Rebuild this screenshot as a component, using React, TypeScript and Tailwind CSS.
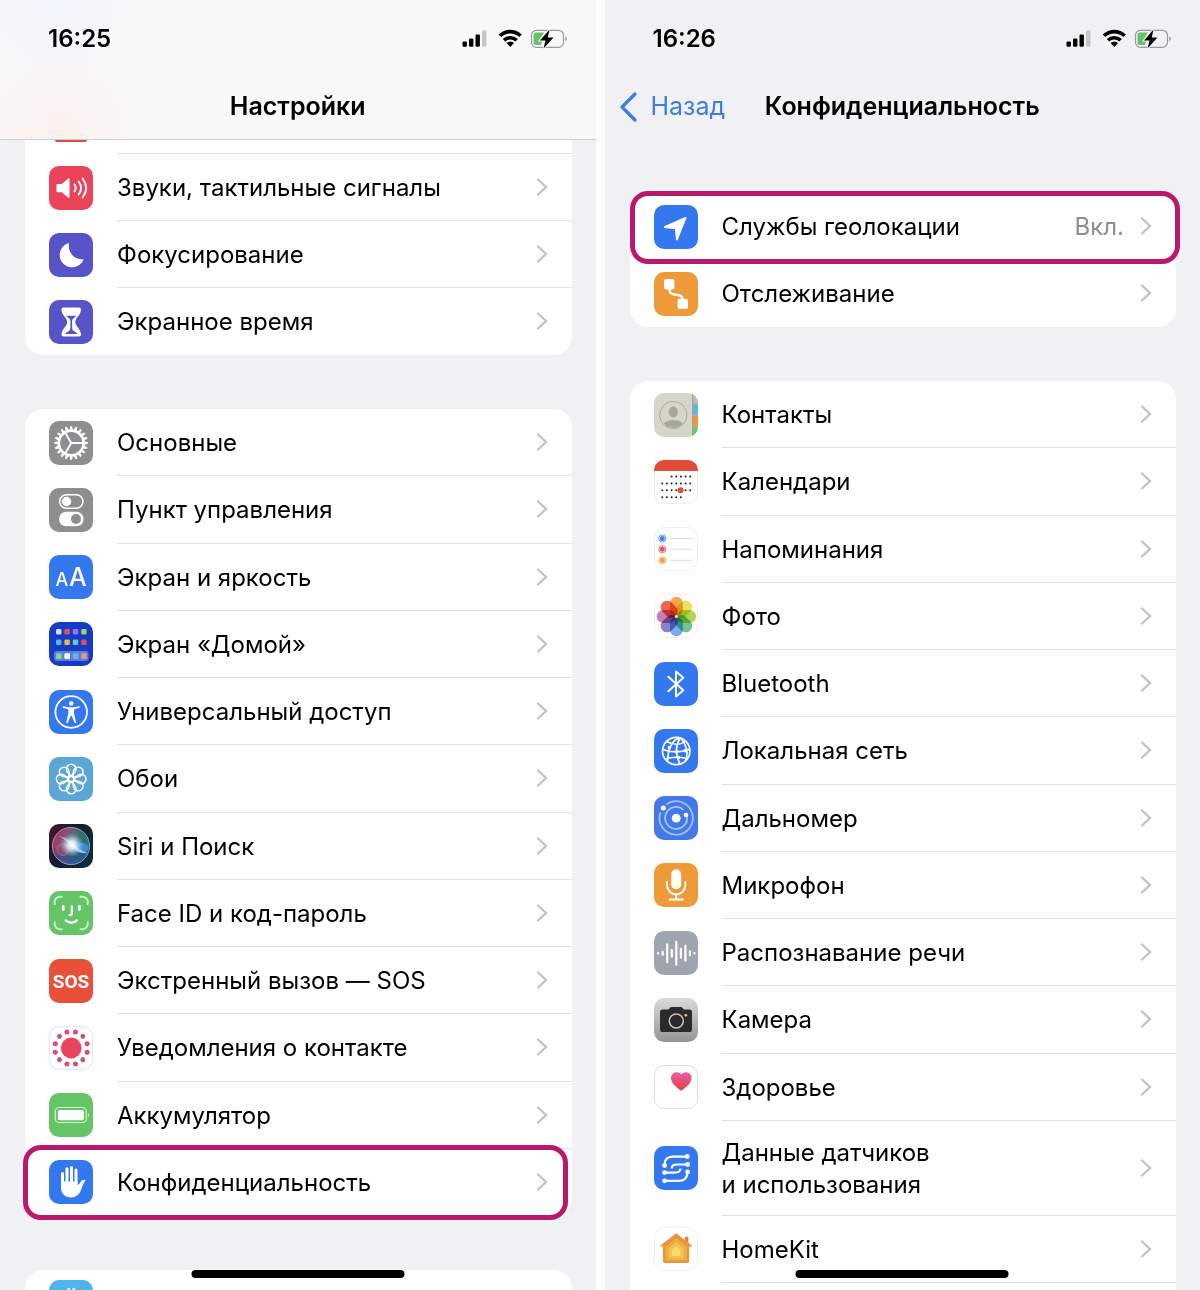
import type { ReactNode } from "react";

type Item = {
  label: ReactNode;
  icon: ReactNode;
  value?: string;
  tall?: boolean;
  highlight?: string;
};

/* ---------- icon helpers ---------- */

function Tile({ bg, outline, children }: { bg: string; outline?: string; children?: ReactNode }) {
  return (
    <svg viewBox="0 0 44 44" className="size-11 shrink-0" aria-hidden="true">
      <rect
        x={outline ? 0.5 : 0}
        y={outline ? 0.5 : 0}
        width={outline ? 43 : 44}
        height={outline ? 43 : 44}
        rx="10"
        fill={bg}
        stroke={outline ?? "none"}
      />
      {children}
    </svg>
  );
}

const steps = (n: number) => Array.from({ length: n }, (_, i) => i);

const BLUE = "#3478f0";
const GREEN = "#64c466";
const GRAY = "#8e8e91";
const ORANGE = "#ee9a38";
const INDIGO = "#5753c9";

const SoundIcon = () => (
  <Tile bg="#ea445a">
    <path d="M8.4 18h4.400l6.400-5.500c.5-.4 1.300-.1 1.300.6v18c0 .7-.8 1-1.300.6l-6.400-5.500H8.400a.9.9 0 0 1-.9-.9v-6.400c0-.5.4-.9.9-.9z" fill="#fff" />
    <g fill="none" stroke="#fff" strokeWidth="1.900" strokeLinecap="round">
      <path d="M25.400 18.400q2.600 3.600 0 7.200" />
      <path d="M29.600 15.500q5 6.500 0 13" />
      <path d="M33.600 12.500q7.200 9.500 0 19" />
    </g>
  </Tile>
);

const MoonIcon = () => (
  <Tile bg={INDIGO}>
    <path d="M19.200 10.200a.6.6 0 0 1 .8.800 13 13 0 0 0 13.700 15.200a.6.6 0 0 1 .7.9A12.400 12.400 0 1 1 19.200 10.200z" fill="#fff" />
  </Tile>
);

const HourglassIcon = () => (
  <Tile bg={INDIGO}>
    <path
      d="M14.500 7.500h15.500c1.500 0 2.200 1 2 2.400-.6 5.600-5.700 7.800-5.700 12.100s5.100 6.500 5.700 12.100c.2 1.400-.5 2.400-2 2.400H14.500c-1.500 0-2.200-1-2-2.400.6-5.600 5.700-7.800 5.700-12.100s-5.100-6.500-5.700-12.100c-.2-1.400.5-2.400 2-2.400z"
      fill="#fff"
    />
    <path d="M17.300 15.700h9.900q-1.200 1.600-3.100 3c-.8.600-1 1.300-1 2.300v7q0 2.400 2.200 3.400l2.600 1.500q1 1.200-.6 1.200H17.200q-1.600 0-.6-1.200l2.600-1.500q2.200-1 2.200-3.400v-7c0-1-.2-1.700-1-2.300q-1.900-1.400-3.100-3z" fill={INDIGO} />
  </Tile>
);

const GearIcon = () => (
  <Tile bg={GRAY}>
    {steps(20).map((i) => (
      <path key={i} d="M21.200 8.400l.5-2.900h1l.5 2.900z" fill="#fff" stroke="#fff" strokeWidth=".9" transform={`rotate(${i * 18} 22.200 22)`} />
    ))}
    <g fill="none" stroke="#fff">
      <circle cx="22.200" cy="22" r="12.400" strokeWidth="2.600" />
      <path d="M22.200 22h12M22.200 22l-6-10.400M22.200 22l-6 10.400" strokeWidth="1.900" />
    </g>
  </Tile>
);

const ControlIcon = () => (
  <Tile bg={GRAY}>
    <rect x="10.600" y="6.800" width="23.400" height="13.400" rx="6.700" fill="none" stroke="#fff" strokeWidth="1.500" />
    <circle cx="17.500" cy="13.500" r="4.700" fill="#fff" />
    <rect x="10" y="23.700" width="24.600" height="14.600" rx="7.300" fill="#fff" />
    <circle cx="27" cy="31" r="5" fill={GRAY} />
  </Tile>
);

const DisplayIcon = () => (
  <Tile bg={BLUE}>
    <g fontFamily="Inter, sans-serif" fontWeight="500" fill="#fff">
      <text x="6.500" y="31" fontSize="18">A</text>
      <text x="20" y="31" fontSize="25">A</text>
    </g>
  </Tile>
);

const HomeScreenIcon = () => {
  const rows = [
    { y: 7, c: ["#d9dce6", "#e0526a", "#a36bf0", "#9fd06a"] },
    { y: 17.6, c: ["#55b4f5", "#e8b84a", "#63c9c0", "#e0504d"] },
  ];
  return (
    <Tile bg="#163bc4">
      <rect x="5" y="29" width="34.500" height="10" rx="3" fill="#5f7dd8" />
      {rows.map((r) => r.c.map((c, i) => <rect key={c} x={7 + i * 8.4} y={r.y} width="5.400" height="5.400" rx="1.200" fill={c} />))}
      {["#86d68c", "#ffffff", "#62b5f5", "#e09a78"].map((c, i) => (
        <rect key={c} x={7 + i * 8.4} y="31.300" width="5.600" height="5.600" rx="1.200" fill={c} />
      ))}
    </Tile>
  );
};

const AccessibilityIcon = () => (
  <Tile bg={BLUE}>
    <circle cx="22.200" cy="22" r="15.800" fill="none" stroke="#fff" strokeWidth="1.800" />
    <circle cx="22.200" cy="13.500" r="2.200" fill="#fff" />
    <path
      d="M14.500 16.300l5 1h5.400l5-1c1-.1 1.200 1.300.2 1.600l-5 1.300v4.600l2 8.200c.3 1.200-1.200 1.600-1.600.5L22.700 26h-1l-2.800 6.500c-.5 1.100-1.900.7-1.600-.5l2-8.200v-4.600l-5-1.300c-1-.3-.8-1.700.2-1.600z"
      fill="#fff"
    />
  </Tile>
);

const WallpaperIcon = () => (
  <Tile bg="#5ba6d6">
    <g fill="none" stroke="#fff" strokeWidth="1.500">
      {steps(8).map((i) => (
        <path key={i} d="M22.200 19C18.600 16 17.400 13.700 17.400 12a4.800 4.800 0 0 1 9.600 0C27 13.700 25.800 16 22.200 19z" transform={`rotate(${i * 45} 22.200 22)`} />
      ))}
      <circle cx="22.200" cy="22" r="2.600" />
    </g>
  </Tile>
);

const SiriIcon = () => (
  <Tile bg="url(#siri-bg)">
    <defs>
      <linearGradient id="siri-bg" x1="0" y1="0" x2="1" y2=".6">
        <stop offset="0" stopColor="#4a1532" />
        <stop offset=".5" stopColor="#171b2c" />
        <stop offset="1" stopColor="#0f2a3c" />
      </linearGradient>
      <linearGradient id="siri-orb" x1="0" y1=".2" x2="1" y2=".6">
        <stop offset="0" stopColor="#b5305c" />
        <stop offset=".45" stopColor="#6c6080" />
        <stop offset=".7" stopColor="#257468" />
        <stop offset="1" stopColor="#2a6fae" />
      </linearGradient>
      <radialGradient id="siri-core">
        <stop offset="0" stopColor="#fff" />
        <stop offset=".35" stopColor="#eef6ff" stopOpacity=".85" />
        <stop offset="1" stopColor="#9cc4ee" stopOpacity="0" />
      </radialGradient>
      <linearGradient id="siri-shade" x1="0" y1="0" x2="0" y2="1">
        <stop offset=".5" stopColor="#141c48" stopOpacity="0" />
        <stop offset="1" stopColor="#3a5ba8" stopOpacity=".9" />
      </linearGradient>
    </defs>
    <circle cx="22" cy="22" r="18.600" fill="url(#siri-orb)" />
    <circle cx="22" cy="22" r="18.600" fill="url(#siri-shade)" stroke="#a0b0c0" strokeOpacity=".8" />
    <circle cx="14" cy="25.500" r="6" fill="#c84a80" fillOpacity=".35" stroke="#e39ab4" strokeOpacity=".5" strokeWidth=".7" />
    <ellipse cx="33" cy="24" rx="6.500" ry="5" fill="#3e9be0" fillOpacity=".75" />
    <path d="M9 12q9 1 15 8 6 6 15 9-10 1-17-6Q17 15 9 12z" fill="#e6f2ff" opacity=".55" />
    <circle cx="23" cy="21" r="12" fill="url(#siri-core)" />
  </Tile>
);

const FaceIdIcon = () => (
  <Tile bg={GREEN}>
    <path
      d="M5.700 13V11a5.200 5.200 0 0 1 5.200-5.200h2M31.500 5.800h2A5.200 5.200 0 0 1 38.700 11v2M38.700 31v2a5.200 5.200 0 0 1-5.200 5.200h-2M12.900 38.200h-2A5.200 5.200 0 0 1 5.700 33v-2"
      fill="none"
      stroke="#c9f2c9"
      strokeWidth="2"
      strokeLinecap="round"
    />
    <g fill="none" stroke="#fff" strokeWidth="2.300" strokeLinecap="round">
      <path d="M14.200 15.500v3M30.400 15.500v3" strokeWidth="2.800" />
      <path d="M22.800 15.500v7q0 1.700-2.200 1.700" />
      <path d="M16.800 29.500q5.500 4.400 11 0" />
    </g>
  </Tile>
);

const SosIcon = () => (
  <Tile bg="#e8503a">
    <text x="22" y="29" textAnchor="middle" fontFamily="Roboto, sans-serif" fontWeight="700" fontSize="19" fill="#fff">
      SOS
    </text>
  </Tile>
);

const ExposureIcon = () => (
  <Tile bg="#fff" outline="#e6e6e8">
    <circle cx="22.200" cy="22" r="10.400" fill="#e9455c" />
    {steps(12).map((i) => (
      <circle key={i} cx="22.200" cy="5.500" r="2.500" fill="#d4507a" transform={`rotate(${15 + i * 30} 22.200 22)`} />
    ))}
  </Tile>
);

const BatteryIcon = () => (
  <Tile bg={GREEN}>
    <rect x="6.300" y="14.500" width="31" height="15" rx="3.800" fill="none" stroke="#d4f3d4" strokeWidth="1.200" />
    <rect x="8.900" y="17" width="26" height="10.200" rx="2" fill="#fff" />
    <path d="M39 19.800q2 2.200 0 4.400z" fill="#d4f3d4" />
  </Tile>
);

const HandIcon = () => (
  <Tile bg={BLUE}>
    <g stroke="#fff" strokeLinecap="round" fill="none" strokeWidth="3">
      <path d="M13.500 13.500V26M18 8.800V24M22.500 7.500V24M27 10V24" />
    </g>
    <path d="M12 21.500h16.500v3.800c1.300-.8 2.200-2 3-3.400.9-1.500 2.500-2.300 4.400-2 .5.100.6.5.3.9-1.500 2-2.400 4.500-3.500 7.500-2 5.800-5 9.200-10.200 9.200-6.500 0-10.500-4-10.500-10z" fill="#fff" />
  </Tile>
);

const AppStoreIcon = () => (
  <Tile bg="#4db4ec">
    <path d="M19.500 9l3 5M25 9L16 25M22 15l7 12" stroke="#e4f5ff" strokeWidth="2.600" strokeLinecap="round" />
  </Tile>
);

const LocationIcon = () => (
  <Tile bg={BLUE}>
    <path d="M31.300 12.100c.8-.3 1.400.3 1.100 1.100l-8.600 21.500c-.4 1-1.600.9-1.800-.2l-1.100-10.300-10.100-1.300c-1.100-.1-1.300-1.400-.2-1.900z" fill="#fff" />
  </Tile>
);

const TrackingIcon = () => (
  <Tile bg={ORANGE}>
    <rect x="10" y="7" width="10.400" height="10.400" rx="2" fill="#fff" />
    <rect x="23.600" y="26.700" width="10.400" height="10.400" rx="2" fill="#fff" />
    <path d="M15.500 16v1.500c0 4.500 3 4.800 6.500 5.300s6.500.7 6.500 3.900v1" stroke="#fff" strokeWidth="2.400" fill="none" />
  </Tile>
);

const ContactsIcon = () => (
  <Tile bg="#d5d5ca">
    <clipPath id="contacts-clip"><rect width="44" height="44" rx="10" /></clipPath>
    <clipPath id="contacts-face"><circle cx="19.300" cy="22" r="12.800" /></clipPath>
    <g clipPath="url(#contacts-clip)">
      <rect x="38.500" y="0" width="5.500" height="11" fill="#bbbbb0" />
      <rect x="38.500" y="11" width="5.500" height="11.500" fill="#5db8f2" />
      <rect x="38.500" y="22.500" width="5.500" height="11" fill="#f0963e" />
      <rect x="38.500" y="33.500" width="5.500" height="10.500" fill="#6cc86c" />
      <rect x="38" width="1.300" height="44" fill="#a5a69a" />
    </g>
    <circle cx="19.300" cy="22" r="13.600" fill="none" stroke="#aaaba0" strokeWidth="1" />
    <g clipPath="url(#contacts-face)" fill="#a6a79c">
      <ellipse cx="19.300" cy="19" rx="4.700" ry="5.400" />
      <ellipse cx="19.300" cy="34" rx="11" ry="7" />
    </g>
  </Tile>
);

const CalendarIcon = () => (
  <Tile bg="#fff" outline="#efeff1">
    <path d="M0 11V10A10 10 0 0 1 10 0h24A10 10 0 0 1 44 10V11z" fill="#e14b3b" />
    {[
      [2, 7, 16.5],
      [0, 7, 23.5],
      [0, 7, 30.3],
      [0, 5, 37.2],
    ].map(([from, to, y]) => steps(to - from).map((i) => <circle key={`${y}-${i}`} cx={8.3 + (from + i) * 4.65} cy={y} r="1" fill="#222" />))}
    <circle cx="26.600" cy="30.300" r="3" fill="#e14b3b" />
  </Tile>
);

const RemindersIcon = () => (
  <Tile bg="#fff" outline="#f1f1f3">
    {[
      ["#3f85ee", 11.5],
      ["#e5554d", 22.3],
      ["#eda044", 33.3],
    ].map(([c, y]) => (
      <g key={c}>
        <circle cx="8.300" cy={y} r="3.600" fill="#fff" stroke={String(c)} strokeWidth=".8" />
        <circle cx="8.300" cy={y} r="2.500" fill={String(c)} />
        <path d={`M17 ${y}h21.500`} stroke="#d4d4d6" strokeWidth=".8" />
      </g>
    ))}
  </Tile>
);

const PhotosIcon = () => (
  <Tile bg="#fff" outline="#f1f1f3">
    {["#f2a03a", "#ece14a", "#a9d24c", "#68bf8c", "#6ba6e6", "#8277c0", "#c575a8", "#e75a48"].map((c, i) => (
      <rect
        key={c}
        x="16"
        y="2.800"
        width="12.800"
        height="19"
        rx="6.400"
        fill={c}
        fillOpacity=".92"
        className="mix-blend-multiply"
        transform={`rotate(${i * 45} 22.400 22.500)`}
      />
    ))}
    <circle cx="22.400" cy="22.500" r="1.300" fill="#fff" />
  </Tile>
);

const BluetoothIcon = () => (
  <Tile bg={BLUE}>
    <path d="M14.300 14.800L29.300 28.300 22 34.500V9.500l7.300 6.200L14.300 29.200" fill="none" stroke="#fff" strokeWidth="2" strokeLinejoin="round" strokeLinecap="round" />
  </Tile>
);

const NetworkIcon = () => (
  <Tile bg={BLUE}>
    <g fill="none" stroke="#fff" strokeWidth="1.700">
      <circle cx="22.200" cy="22" r="13.700" />
      <path d="M25.500 8.700C19 11 14 17 13.500 32.500M26 8.800C21.500 17 21.500 27 26 35.300M26.500 9C33 16 34.500 25 31.500 32M12.500 12.500C20 16.500 27 16 31 12M8.700 20.500C18 24 28 23 35.800 20.500M11 30C18 27.500 26 28 33.500 29.500" />
    </g>
    <g fill="#fff">
      <circle cx="15.500" cy="18.500" r="1.800" />
      <circle cx="22.800" cy="22.700" r="1.800" />
      <circle cx="31" cy="21.700" r="1.800" />
      <circle cx="24.600" cy="28.500" r="1.800" />
    </g>
  </Tile>
);

const RangeIcon = () => (
  <Tile bg="#4478e8">
    <g fill="none" stroke="#a5c2f8" strokeWidth="1.800">
      <path d="M12.600 8.300A16.700 16.700 0 1 1 6.500 16.200" />
      <path d="M33 20.300A11 11 0 1 1 29.500 13.800" />
    </g>
    <circle cx="22.200" cy="22.200" r="4.400" fill="#fff" />
    <circle cx="9.300" cy="12" r="2.500" fill="#fff" />
    <circle cx="32" cy="19" r="2.300" fill="#fff" />
  </Tile>
);

const MicrophoneIcon = () => (
  <Tile bg={ORANGE}>
    <rect x="17.200" y="6.300" width="10" height="20" rx="5" fill="#fff" />
    <path d="M13 19v3.200a9.200 9.200 0 0 0 18.400 0V19M22.200 31.500v4.700M15.500 36.500h13.400" fill="none" stroke="#fff" strokeWidth="1.900" strokeLinecap="round" />
  </Tile>
);

const SpeechIcon = () => (
  <Tile bg="#a0a4af">
    {[2.4, 5, 20, 9, 25, 11, 17, 6, 2.4].map((h, i) => (
      <rect key={i} x={3 + i * 4.55} y={22.3 - h / 2} width="2.200" height={h} rx="1.100" fill="#fff" />
    ))}
  </Tile>
);

const CameraIcon = () => (
  <Tile bg="url(#camera-bg)">
    <defs>
      <linearGradient id="camera-bg" x1="0" y1="0" x2="0" y2="1">
        <stop offset="0" stopColor="#dadada" />
        <stop offset="1" stopColor="#959595" />
      </linearGradient>
    </defs>
    <path d="M8.500 11.500h6l1.500-1.700q.6-.8 1.700-.8h9q1 0 1.700.8l1.500 1.700h5.600q2.500 0 2.500 2.500v17.500q0 2.500-2.500 2.500h-27Q6 34 6 31.500V14q0-2.500 2.500-2.500z" fill="#2a2a2b" />
    <circle cx="22.300" cy="23" r="7" fill="none" stroke="#c4c4c4" strokeWidth="1.500" />
    <circle cx="31.800" cy="17.300" r="1.400" fill="#f3c33c" />
  </Tile>
);

const HealthIcon = () => (
  <Tile bg="#fff" outline="#dedee0">
    <defs>
      <linearGradient id="health-heart" x1="0" y1="0" x2="0" y2="1">
        <stop offset="0" stopColor="#e95eb0" />
        <stop offset="1" stopColor="#e83c3c" />
      </linearGradient>
    </defs>
    <path d="M27.200 25.800C21 21.500 17 17.500 17 13c0-6 7.200-7.600 10.200-3.400C30.200 5.400 37.500 7 37.500 13c0 4.500-4 8.500-10.300 12.800z" fill="url(#health-heart)" />
  </Tile>
);

const SensorIcon = () => (
  <Tile bg={BLUE}>
    <g fill="none" stroke="#fff" strokeWidth="2.200">
      <path d="M10.600 19.500c0-6 2.500-8.800 8-8.800H33" />
      <path d="M33.500 18.500H24c-4.500 0-6 .5-6.500 4" />
      <path d="M10.600 26.600H20c4.500 0 6-.5 6.500-4" />
      <path d="M10.600 34.800H25c6 0 8.500-3 8.500-8.800" />
    </g>
    <g fill="#fff">
      <circle cx="10.600" cy="19.500" r="2.400" />
      <circle cx="33.300" cy="10.500" r="2.400" />
      <circle cx="33.600" cy="18.500" r="2.400" />
      <circle cx="10.600" cy="26.600" r="2.400" />
      <circle cx="10.600" cy="34.800" r="2.400" />
      <circle cx="33.600" cy="26" r="2.400" />
    </g>
  </Tile>
);

const HomeKitIcon = () => (
  <Tile bg="#fff" outline="#f1f1f3">
    <path d="M22.200 6.200L38 18.500q.7 1-.5 1h-2.300V34q0 2-2 2H11q-2 0-2-2V19.500H6.900q-1.200 0-.5-1z" fill="#e9953a" />
    <path d="M30.800 9.800h3.600v6.500l-3.600-3z" fill="#d9863a" />
    <path d="M22.200 11L33 19.500V33.500H11.500V19.500z" fill="#efab45" />
    <path d="M22.200 15L29.800 21V31.500H14.700V21z" fill="#f4c04f" />
    <path d="M22.200 19L26.500 22.500V29H18V22.500z" fill="#f9db6a" />
  </Tile>
);

/* ---------- status bar ---------- */

function StatusBar({ time }: { time: string }) {
  return (
    <div className="flex h-[76px] items-center justify-between pt-0.5 pr-7 pl-12">
      <span className="text-2xl font-semibold">{time}</span>
      <svg viewBox="0 0 107 20" className="h-5 w-[107px]" aria-hidden="true">
        <rect x="1.500" y="12.500" width="4.400" height="5.300" rx="1.200" />
        <rect x="8" y="9.500" width="4.400" height="8.300" rx="1.200" />
        <rect x="14.500" y="5.500" width="4.400" height="12.300" rx="1.200" />
        <rect x="21" y="1.500" width="4.400" height="16.300" rx="1.200" fill="#c6c6c8" />
        <g fill="none" stroke="#000" strokeWidth="3.600">
          <path d="M39 6.800a14.800 14.800 0 0 1 20.600 0" />
          <path d="M43 11.300a9.200 9.200 0 0 1 12.600 0" />
        </g>
        <path d="M49.300 18l-3.700-3.900a5.300 5.300 0 0 1 7.400 0z" />
        <rect x="70.500" y="1.300" width="32" height="17" rx="5" fill="none" stroke="#9a9a9c" strokeWidth="1.200" />
        <path d="M75 3.500H83l-5 8h3.500l-1.600 4.600H75a2.500 2.500 0 0 1-2.500-2.500V6A2.500 2.500 0 0 1 75 3.500z" fill="#64c466" />
        <path d="M104.300 7.200q3.300 2.700 0 5.400z" fill="#9a9a9c" />
        <path d="M88.500.5L79 11.500h5.500L82.500 19.500l10-11h-5.700z" stroke="#f7f7f7" strokeWidth="2" paintOrder="stroke" />
      </svg>
    </div>
  );
}

/* ---------- lists ---------- */

const Chevron = () => (
  <svg viewBox="0 0 12 20" className="h-5 w-3 shrink-0" aria-hidden="true">
    <path d="M2 2.500l8 7.500-8 7.500" fill="none" stroke="#c3c3c6" strokeWidth="2.300" strokeLinecap="round" />
  </svg>
);

function Row({ item, last }: { item: Item; last: boolean }) {
  return (
    <li className={item.tall ? "relative min-h-[95px] flex-none" : "relative min-h-[67px] flex-1"}>
      <a href="#" className="flex h-full items-stretch gap-6 pl-6">
        <span className="flex items-center">{item.icon}</span>
        <span className={`flex flex-1 items-center justify-between border-b pr-6 ${last ? "border-transparent" : "border-[#e1e1e3]"}`}>
          <span className="pt-0.5 text-2xl leading-8">{item.label}</span>
          <span className="flex items-center gap-4">
            {item.value && <span className="pt-0.5 text-2xl text-[#8e8e92]">{item.value}</span>}
            <Chevron />
          </span>
        </span>
      </a>
      {item.highlight && (
        <span className={`pointer-events-none absolute z-10 rounded-[18px] border-5 border-[#b9196c] ${item.highlight}`} />
      )}
    </li>
  );
}

function Group({ items, className, continued }: { items: Item[]; className: string; continued?: boolean }) {
  return (
    <ul className={`flex shrink-0 flex-col bg-[#fefefe] ${className}`}>
      {items.map((item, i) => (
        <Row key={i} item={item} last={i === items.length - 1 && !continued} />
      ))}
    </ul>
  );
}

const HomeIndicator = () => (
  <div className="absolute bottom-3 left-1/2 z-20 h-2 w-[213px] -translate-x-1/2 rounded-full bg-black" />
);

const attention: Item[] = [
  { label: "Звуки, тактильные сигналы", icon: <SoundIcon /> },
  { label: "Фокусирование", icon: <MoonIcon /> },
  { label: "Экранное время", icon: <HourglassIcon /> },
];

const general: Item[] = [
  { label: "Основные", icon: <GearIcon /> },
  { label: "Пункт управления", icon: <ControlIcon /> },
  { label: "Экран и яркость", icon: <DisplayIcon /> },
  { label: "Экран «Домой»", icon: <HomeScreenIcon /> },
  { label: "Универсальный доступ", icon: <AccessibilityIcon /> },
  { label: "Обои", icon: <WallpaperIcon /> },
  { label: "Siri и Поиск", icon: <SiriIcon /> },
  { label: "Face ID и код-пароль", icon: <FaceIdIcon /> },
  { label: "Экстренный вызов — SOS", icon: <SosIcon /> },
  { label: "Уведомления о контакте", icon: <ExposureIcon /> },
  { label: "Аккумулятор", icon: <BatteryIcon /> },
  { label: "Конфиденциальность", icon: <HandIcon />, highlight: "-top-1 -bottom-1 -left-0.5 right-1" },
];

const services: Item[] = [
  { label: "Службы геолокации", icon: <LocationIcon />, value: "Вкл.", highlight: "-top-0.5 -bottom-1 left-0 -right-1" },
  { label: "Отслеживание", icon: <TrackingIcon /> },
];

const permissions: Item[] = [
  { label: "Контакты", icon: <ContactsIcon /> },
  { label: "Календари", icon: <CalendarIcon /> },
  { label: "Напоминания", icon: <RemindersIcon /> },
  { label: "Фото", icon: <PhotosIcon /> },
  { label: "Bluetooth", icon: <BluetoothIcon /> },
  { label: "Локальная сеть", icon: <NetworkIcon /> },
  { label: "Дальномер", icon: <RangeIcon /> },
  { label: "Микрофон", icon: <MicrophoneIcon /> },
  { label: "Распознавание речи", icon: <SpeechIcon /> },
  { label: "Камера", icon: <CameraIcon /> },
  { label: "Здоровье", icon: <HealthIcon /> },
  { label: <>Данные датчиков<br />и использования</>, icon: <SensorIcon />, tall: true },
  { label: "HomeKit", icon: <HomeKitIcon /> },
];

export default function App() {
  return (
    <main className="grid h-screen grid-cols-2 gap-[9px] overflow-hidden bg-[#fefefe] font-[Inter,sans-serif] text-black">
      <section className="relative flex min-h-0 flex-col overflow-hidden bg-[#f1f1f4]">
        <header className="shrink-0 border-b border-[#cfcfd1] bg-[#f8f8f8] bg-[radial-gradient(circle_at_60px_130px,#fcf0ee_0,transparent_80px),radial-gradient(circle_at_55px_0px,#f0f4fd_0,transparent_80px)]">
          <StatusBar time="16:25" />
          <h1 className="flex h-[63px] items-center justify-center pb-0.5 text-[25px] font-semibold">Настройки</h1>
        </header>
        <div className="flex flex-col pr-6 pl-[25px]">
          <div className="flex h-[14px] items-start border-b border-transparent bg-[#fefefe] pl-6">
            <span className="w-11 px-1.5"><span className="block h-0.5 rounded-b-sm bg-[#d9503f]" /></span>
            <span className="ml-6 h-[14px] flex-1 border-b border-[#e1e1e3]" />
          </div>
          <Group items={attention} className="min-h-[201px] rounded-b-[18px]" />
          <Group items={general} className="mt-[54px] min-h-[807px] rounded-[18px]" />
          <div className="mt-[54px] flex h-[67px] items-start rounded-t-[18px] bg-[#fefefe] pt-2.5 pl-6">
            <AppStoreIcon />
          </div>
        </div>
        <HomeIndicator />
      </section>

      <section className="relative flex min-h-0 flex-col overflow-hidden bg-[#f1f1f4]">
        <header className="shrink-0">
          <StatusBar time="16:26" />
          <div className="grid h-16 grid-cols-[1fr_auto_1fr] items-center pb-0.5">
            <a href="#" className="flex items-center gap-3 pl-3.5 text-[25px] text-[#3b7de4]">
              <svg viewBox="0 0 20 32" className="h-8 w-5" aria-hidden="true">
                <path d="M16 3L3 16l13 13" fill="none" stroke="currentColor" strokeWidth="3.200" strokeLinecap="round" strokeLinejoin="round" />
              </svg>
              Назад
            </a>
            <h1 className="text-[25px] font-semibold">Конфиденциальность</h1>
          </div>
        </header>
        <div className="flex flex-col pr-6 pl-[25px]">
          <Group items={services} className="mt-[53px] min-h-[134px] rounded-[18px]" />
          <Group items={permissions} continued className="mt-[54px] min-h-[902px] rounded-t-[18px]" />
          <div className="h-12 bg-[#fefefe]" />
        </div>
        <HomeIndicator />
      </section>
    </main>
  );
}
